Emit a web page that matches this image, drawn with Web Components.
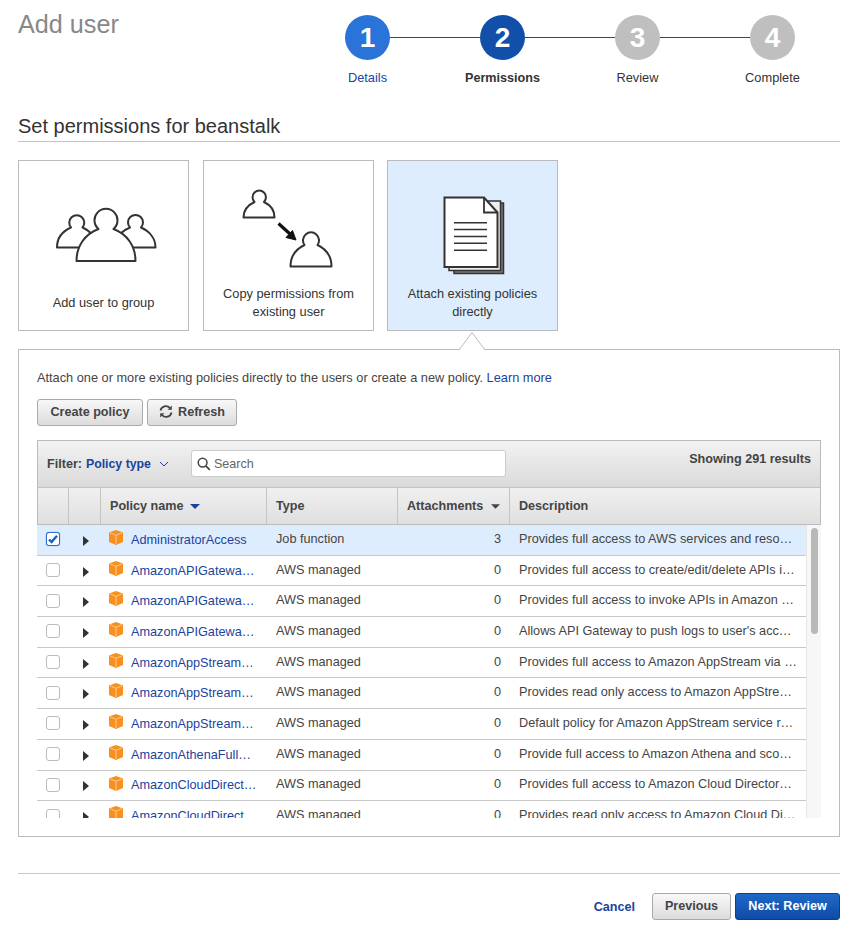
<!DOCTYPE html>
<html>
<head>
<meta charset="utf-8">
<title>Add user</title>
<style>
html, body { margin: 0; padding: 0; background: #fff; }
body { font: 12.8px/18px "Liberation Sans", Arial, sans-serif; color: #444; }
</style>
</head>
<body>
<add-user-page></add-user-page>

<script>
class WizardStep extends HTMLElement {
  constructor() {
    super();
    this.root = this.attachShadow({ mode: 'open' });
    const n = this.getAttribute('n');
    this.root.innerHTML = `<style>
:host { display: block; text-align: center; font-size: 12.8px; color: #333; }
.track { display: flex; align-items: center; height: 45px; }
.line { flex: 1; height: 1px; background: #444; }
:host([first]) .left, :host([last]) .right { visibility: hidden; }
.dot { width: 45px; height: 45px; border-radius: 50%; background: #bfbfbf; color: #fff; font: bold 28px/45px "Liberation Sans", Arial, sans-serif; }
:host([state=done]) .dot { background: #2a73d8; }
:host([state=active]) .dot { background: #124fa8; }
:host([state=done]) .label { color: #1a43a0; }
:host([state=active]) .label { font-weight: bold; font-size: 12.6px; color: #333; }
.label { margin-top: 9px; line-height: 18px; }
</style>
<div class="track"><div class="line left"></div><div class="dot">${n}</div><div class="line right"></div></div>
<div class="label"><slot></slot></div>`;
  }
}
customElements.define('wizard-step', WizardStep);

class ChoiceCard extends HTMLElement {
  constructor() {
    super();
    this.root = this.attachShadow({ mode: 'open' });
    this.root.innerHTML = `<style>
:host { display: flex; flex-direction: column; box-sizing: border-box; width: 171px; height: 171px; border: 1px solid #bbb; background: #fff; color: #333; font-size: 12.8px; line-height: 18px; text-align: center; }
:host([selected]) { background: #deedfd; }
.art { flex: none; height: 124px; }
.label { flex: none; height: 36px; display: flex; align-items: center; justify-content: center; padding: 0 10px; }
::slotted(svg) { display: block; }
</style>
<div class="art"><slot name="art"></slot></div>
<div class="label"><span><slot></slot></span></div>`;
  }
}
customElements.define('choice-card', ChoiceCard);

class AwsButton extends HTMLElement {
  constructor() {
    super();
    this.root = this.attachShadow({ mode: 'open' });
    this.root.innerHTML = `<style>
:host { display: inline-flex; align-items: center; justify-content: center; gap: 5px; box-sizing: border-box; height: 27px; padding-bottom: 2px; border: 1px solid #aaa; border-radius: 3px; background: linear-gradient(#f8f8f8, #dcdcdc); color: #444; font-size: 12.6px; font-weight: bold; }
:host([primary]) { background: linear-gradient(#1f68c7, #0f4ba6); border-color: #0c3f8c; color: #fff; }
::slotted(svg) { display: block; }
</style>
<slot></slot>`;
  }
}
customElements.define('aws-button', AwsButton);

class PolicyRow extends HTMLElement {
  constructor() {
    super();
    this.root = this.attachShadow({ mode: 'open' });
    const a = n => this.getAttribute(n);
    const tick = this.hasAttribute('selected')
      ? '<svg width="14" height="14" viewBox="0 0 14 14"><path d="M3 7.5l2.6 2.6L11 3.8" fill="none" stroke="#1a5fc0" stroke-width="2.4"/></svg>'
      : '';
    this.root.innerHTML = `<style>
:host { display: grid; grid-template-columns: 32px 32px 166px 131px 112px 1fr; flex: none; box-sizing: border-box; height: 30.7px; border-bottom: 1px solid #c8c8c8; background: #fff; color: #444; font-size: 12.7px; }
:host([selected]) { background: #deedfd; }
.cell { display: flex; align-items: center; white-space: nowrap; overflow: hidden; }
.check { padding: 0 0 1px 9px; }
.box { box-sizing: border-box; width: 14px; height: 14px; border: 1px solid #bbb; border-radius: 3px; background: #fff; }
:host([selected]) .box { border-color: #2a6fd0; box-shadow: 0 0 1px #2a6fd0; }
.box svg { display: block; margin: -1px; }
.expand { padding: 2px 0 0 14px; }
.name { gap: 8px; padding-left: 8px; }
.name svg { align-self: flex-start; margin-top: 5px; }
.name a { color: #1a43a0; }
.type, .num, .desc { padding-bottom: 2px; }
.type { padding-left: 9px; }
.num { justify-content: flex-end; padding-right: 9px; }
.desc { padding-left: 9px; }
</style>
<div class="cell check"><div class="box">${tick}</div></div>
<div class="cell expand"><svg width="6" height="10" viewBox="0 0 6 10"><path d="M0 0l6 5-6 5z" fill="#333"/></svg></div>
<div class="cell name"><svg width="14" height="15" viewBox="0 0 14 15"><path d="M7 0l7 2.600v9.400L7 15 0 12V2.600z" fill="#f7901e"/><path d="M1 2.800l6 2.500 6-2.500M7 5.300V14" fill="none" stroke="#fbcb94" stroke-width="1"/></svg><a>${a('name')}</a></div>
<div class="cell type">${a('type')}</div>
<div class="cell num">${a('count')}</div>
<div class="cell desc">${a('desc')}</div>`;
  }
}
customElements.define('policy-row', PolicyRow);

const POLICIES = [
  ['AdministratorAccess', 'Job function', '3', 'Provides full access to AWS services and reso…'],
  ['AmazonAPIGatewa…', 'AWS managed', '0', 'Provides full access to create/edit/delete APIs i…'],
  ['AmazonAPIGatewa…', 'AWS managed', '0', 'Provides full access to invoke APIs in Amazon …'],
  ['AmazonAPIGatewa…', 'AWS managed', '0', "Allows API Gateway to push logs to user's acc…"],
  ['AmazonAppStream…', 'AWS managed', '0', 'Provides full access to Amazon AppStream via …'],
  ['AmazonAppStream…', 'AWS managed', '0', 'Provides read only access to Amazon AppStre…'],
  ['AmazonAppStream…', 'AWS managed', '0', 'Default policy for Amazon AppStream service r…'],
  ['AmazonAthenaFull…', 'AWS managed', '0', 'Provide full access to Amazon Athena and sco…'],
  ['AmazonCloudDirect…', 'AWS managed', '0', 'Provides full access to Amazon Cloud Director…'],
  ['AmazonCloudDirect…', 'AWS managed', '0', 'Provides read only access to Amazon Cloud Di…']
];

class PolicyTable extends HTMLElement {
  constructor() {
    super();
    this.root = this.attachShadow({ mode: 'open' });
    this.root.innerHTML = `<style>
:host { display: block; font-size: 12.6px; color: #444; }
.bar { display: flex; box-sizing: border-box; height: 48px; padding: 9px 9px 0 9px; border: 1px solid #bbb; border-bottom-color: #c4c4c4; background: linear-gradient(#f2f2f2, #dadada); }
.filter { display: flex; align-items: center; height: 27px; font-weight: bold; }
.filter span { color: #1a43a0; margin-left: 4px; font-size: 12.3px; }
.filter svg { margin-left: 8px; }
.search { display: flex; align-items: center; gap: 3px; box-sizing: border-box; width: 315px; height: 27px; margin-left: 22px; padding-left: 5px; background: #fff; border: 1px solid #ccc; border-radius: 3px; color: #666; }
.count { margin-left: auto; font-weight: bold; line-height: 18px; }
.head { display: grid; grid-template-columns: 30px 32px 166px 131px 112px 1fr; box-sizing: border-box; height: 37px; border: 1px solid #bbb; border-width: 0 1px 1px; background: linear-gradient(#f0f0f0, #dfdfdf); font-weight: bold; }
.head div { display: flex; align-items: center; gap: 8px; padding-left: 9px; border-left: 1px solid #c4c4c4; }
.head div:first-child { border-left: 0; }
.head .first-sort svg { margin-left: -2px; }
.view { display: flex; height: 293px; overflow: hidden; }
.rows { flex: none; width: 769px; display: flex; flex-direction: column; }
.track { flex: none; width: 15px; box-sizing: border-box; padding: 3px 3px 0 4px; background: #f7f7f7; border-left: 1px solid #e6e6e6; }
.thumb { height: 106px; border-radius: 4px; background: #b9b9b9; }
</style>
<div class="bar">
  <div class="filter">Filter:<span>Policy type</span><svg width="10" height="6" viewBox="0 0 10 6"><path d="M1 1l4 4 4-4" fill="none" stroke="#1a43a0"/></svg></div>
  <div class="search"><svg width="14" height="14" viewBox="0 0 14 14"><circle cx="5.6" cy="5.6" r="4.4" fill="none" stroke="#444" stroke-width="1.5"/><path d="M8.8 8.8l4 4" stroke="#444" stroke-width="1.8"/></svg>Search</div>
  <div class="count">Showing 291 results</div>
</div>
<div class="head">
  <div></div><div></div>
  <div class="first-sort">Policy name <svg width="10" height="5" viewBox="0 0 10 5"><path d="M0 0h10L5 5z" fill="#1a43a0"/></svg></div>
  <div>Type</div>
  <div>Attachments <svg width="9" height="5" viewBox="0 0 10 5"><path d="M0 0h10L5 5z" fill="#444"/></svg></div>
  <div>Description</div>
</div>
<div class="view">
  <div class="rows"></div>
  <div class="track"><div class="thumb"></div></div>
</div>`;
    const rows = this.root.querySelector('.rows');
    POLICIES.forEach((p, i) => {
      rows.appendChild(makeRow(p, i === 0));
    });
  }
}

function makeRow(p, selected) {
  const tpl = document.createElement('template');
  const esc = s => s.replace(/"/g, '&quot;');
  tpl.innerHTML = `<policy-row ${selected ? 'selected' : ''} name="${esc(p[0])}" type="${esc(p[1])}" count="${p[2]}" desc="${esc(p[3])}"></policy-row>`;
  return document.importNode(tpl.content, true).firstChild;
}
customElements.define('policy-table', PolicyTable);

class AddUserPage extends HTMLElement {
  constructor() {
    super();
    this.root = this.attachShadow({ mode: 'open' });
    this.root.innerHTML = `<style>
:host { display: block; box-sizing: border-box; width: 859px; height: 938px; padding: 0 19px 0 18px; overflow: hidden; color: #444; }
.top { display: flex; justify-content: space-between; height: 113px; padding-top: 15px; box-sizing: border-box; }
h1 { margin: -6px 0 0; font-size: 25.2px; line-height: 30px; font-weight: normal; color: #888; }
.stepper { display: grid; grid-template-columns: repeat(4, 135px); align-self: flex-start; }
h2 { margin: 0; height: 28px; border-bottom: 1px solid #c4c4c4; font-size: 20px; line-height: 26px; font-weight: normal; color: #333; }
.cards { display: flex; gap: 14px; margin-top: 18px; }
.cards choice-card:last-child { margin-left: -1px; }
.panel { position: relative; box-sizing: border-box; height: 488px; margin-top: 18px; padding: 19px 18px 0; border: 1px solid #bbb; font-size: 12.77px; }
.notch { position: absolute; left: 440px; top: -18px; display: block; }
.panel a { color: #1a43a0; }
.actions { display: flex; gap: 4px; margin: 12px 0 14px; }
.actions aws-button:first-child { width: 106px; }
.actions aws-button:last-child { width: 90px; }
.foot { display: flex; align-items: center; justify-content: flex-end; margin-top: 36px; padding-top: 19px; border-top: 1px solid #c8c8c8; }
.cancel { margin-right: 17px; color: #1a43a0; font-weight: bold; font-size: 12.6px; }
.foot aws-button { width: 79px; }
.foot aws-button[primary] { width: 105px; margin-left: 4px; }
</style>
<div class="top">
  <h1>Add user</h1>
  <div class="stepper">
    <wizard-step n="1" state="done" first>Details</wizard-step>
    <wizard-step n="2" state="active">Permissions</wizard-step>
    <wizard-step n="3">Review</wizard-step>
    <wizard-step n="4" last>Complete</wizard-step>
  </div>
</div>
<h2>Set permissions for beanstalk</h2>
<div class="cards">
  <choice-card>
    <svg slot="art" width="169" height="123" viewBox="19 161 169 123" fill="#fff" stroke="#333" stroke-width="2" stroke-linejoin="round">
      <path d="M57 247.500C57 238 63 231 71 227.500A7.500 7.500 0 1 1 82.500 227.500C86 229 89 231 92 234V247.500Z"/>
      <path d="M155.500 247.500C155.500 238 149 231 141 227.500A7.500 7.500 0 1 0 130 227.500C126 229 123 231 120 234V247.500Z"/>
      <path d="M76.500 261C76.500 246 85 234 98.500 229A11.500 11.500 0 1 1 113.500 229C127 234 135.500 246 135.500 261Z"/>
    </svg>
    Add user to group
  </choice-card>
  <choice-card>
    <svg slot="art" width="169" height="123" viewBox="204 161 169 123" fill="#fff" stroke="#333" stroke-width="2" stroke-linejoin="round">
      <path d="M243.500 217.500C243.500 210 248 205 254.500 202A6.700 6.700 0 1 1 264 202C270.500 205 274.500 210 274.500 217.500Z"/>
      <path d="M290.500 266.500C290.500 256 296 249 304.500 245A8 8 0 1 1 317.500 245C326 249 331.500 256 331.500 266.500Z"/>
      <path d="M278.500 223.500L290 234" stroke="#111" stroke-width="3.200" fill="none"/>
      <path d="M296 240L292.500 230.500L286 237.500Z" fill="#111" stroke="#111" stroke-width="1"/>
    </svg>
    Copy permissions from existing user
  </choice-card>
  <choice-card selected>
    <svg slot="art" width="169" height="123" viewBox="388 161 169 123" fill="#fff" stroke="#333" stroke-width="1.500">
      <path d="M456 203H503.500V273.500H454V271" fill="#777" stroke="#333"/>
      <path d="M452 201H500.500V270.500H449V268" fill="#eee" stroke="#333"/>
      <path d="M444.500 197.500H484L497.500 212.500V267H444.500Z" stroke-width="2"/>
      <path d="M484 197.500V212.500H497.500" fill="none" stroke-width="1.800"/>
      <path d="M454 222.700H487M454 229.500H487M454 236.500H487M454 243.300H487M454 250.300H487" fill="none"/>
    </svg>
    Attach existing policies directly
  </choice-card>
</div>
<div class="panel">
  <svg class="notch" width="26" height="19" viewBox="0 0 26 19"><path d="M0 18L13 .5 26 18" fill="#fff" stroke="#bbb"/><path d="M1 18.500H25" stroke="#fff" stroke-width="1.500"/></svg>
  <div>Attach one or more existing policies directly to the users or create a new policy. <a>Learn more</a></div>
  <div class="actions">
    <aws-button>Create policy</aws-button>
    <aws-button><svg width="14" height="13" viewBox="0 0 14 13"><path d="M1.500 5.500A5.500 5.500 0 0 1 11 3M12.500 7.500A5.500 5.500 0 0 1 3 10" fill="none" stroke="#444" stroke-width="1.800"/><path d="M12.800 .6v4.200H8.600zM1.200 12.400V8.200h4.200z" fill="#444"/></svg>Refresh</aws-button>
  </div>
  <policy-table></policy-table>
</div>
<div class="foot">
  <span class="cancel">Cancel</span>
  <aws-button>Previous</aws-button>
  <aws-button primary>Next: Review</aws-button>
</div>`;
  }
}
customElements.define('add-user-page', AddUserPage);
</script>
</body>
</html>
